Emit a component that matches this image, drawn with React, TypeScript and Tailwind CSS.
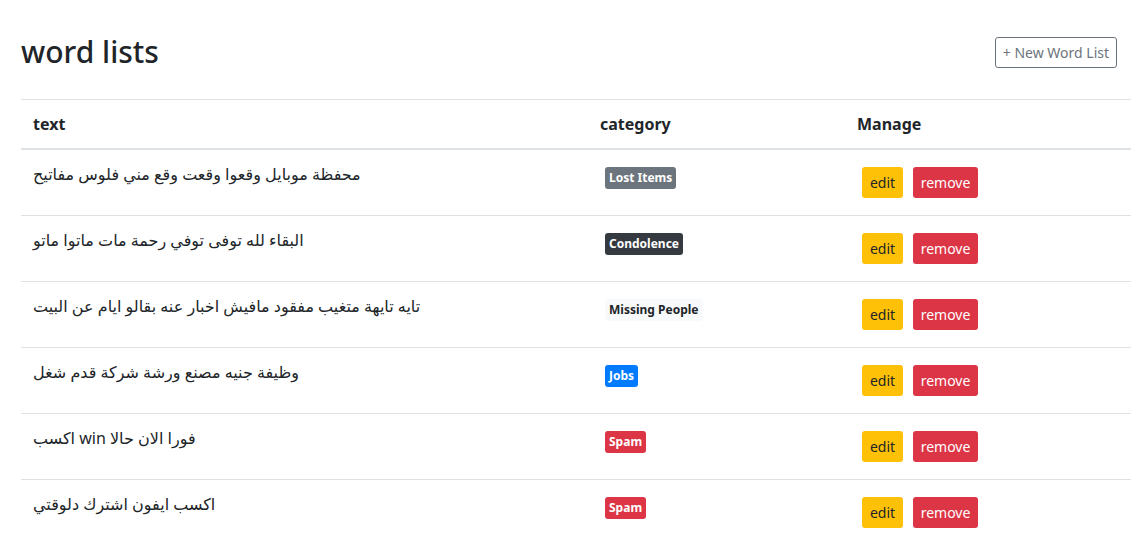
import React from 'react';

const rows = [
  { text: 'محفظة موبايل وقعوا وقعت وقع مني فلوس مفاتيح', category: 'Lost Items', badge: 'bg-[#6c757d] text-white' },
  { text: 'البقاء لله توفى توفي رحمة مات ماتوا ماتو', category: 'Condolence', badge: 'bg-[#343a40] text-white' },
  { text: 'تايه تايهة متغيب مفقود مافيش اخبار عنه بقالو ايام عن البيت', category: 'Missing People', badge: 'bg-[#f8f9fa] text-[#212529]' },
  { text: 'وظيفة جنيه مصنع ورشة شركة قدم شغل', category: 'Jobs', badge: 'bg-[#007bff] text-white' },
  { text: 'اكسب win فورا الان حالا', category: 'Spam', badge: 'bg-[#dc3545] text-white' },
  { text: 'اكسب ايفون اشترك دلوقتي', category: 'Spam', badge: 'bg-[#dc3545] text-white' }
];

const App = () => {
  return (
    <div className="min-h-screen bg-white text-[#212529] font-['Noto_Sans','DejaVu_Sans',sans-serif] pl-[21px] pr-[9px] pt-[33px]">
      {/* Header */}
      <div className="flex items-center justify-between pr-[14px]">
        <h2 className="text-[30px] leading-[38px] font-medium">word lists</h2>
        <button className="h-[31px] px-[7px] border border-[#6c757d] rounded-[3px] text-[14px] text-[#6c757d]">
          + New Word List
        </button>
      </div>

      {/* Table */}
      <table className="w-full mt-[28px] border-collapse text-[16px]">
        <colgroup>
          <col className="w-[567px]" />
          <col className="w-[257px]" />
          <col />
        </colgroup>
        <thead>
          <tr className="border-t border-[#dee2e6] border-b-2">
            <th className="text-left font-bold px-3 py-3 leading-6 align-bottom">text</th>
            <th className="text-left font-bold px-3 py-3 leading-6 align-bottom">category</th>
            <th className="text-left font-bold px-3 py-3 leading-6 align-bottom">Manage</th>
          </tr>
        </thead>
        <tbody>
          {rows.map((row, i) => (
            <tr key={i} className="border-t border-[#dee2e6] first:border-t-0 h-[66px]">
              <td className="px-3 pt-[12px] pb-3 align-top leading-6">{row.text}</td>
              <td className="px-3 pt-[17px] pb-3 align-top">
                <div className="flex">
                  <span className={`ml-[5px] px-[4px] h-[22px] leading-[22px] rounded-[3px] text-[12px] font-bold ${row.badge}`}>
                    {row.category}
                  </span>
                </div>
              </td>
              <td className="px-3 pt-[17px] pb-3 align-top">
                <div className="flex gap-[10px] ml-[5px]">
                  <button className="h-[31px] w-[41px] rounded-[3px] bg-[#ffc107] text-[14px] text-[#212529]">edit</button>
                  <button className="h-[31px] w-[65px] rounded-[3px] bg-[#dc3545] text-[14px] text-white">remove</button>
                </div>
              </td>
            </tr>
          ))}
        </tbody>
      </table>
    </div>
  );
};

export default App;
